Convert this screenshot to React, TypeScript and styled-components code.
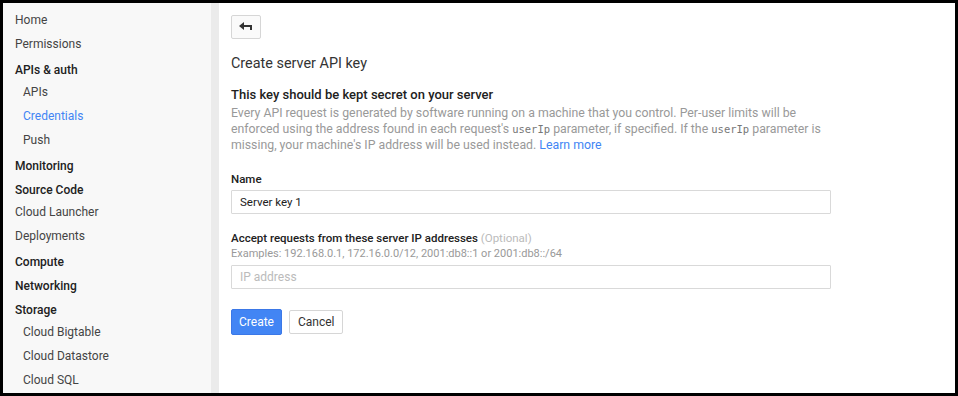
import React from 'react';
import styled, { createGlobalStyle } from 'styled-components';

const GlobalStyle = createGlobalStyle`
  html, body {
    margin: 0;
    padding: 0;
    background: #000;
  }
  body {
    font-family: Roboto, "Liberation Sans", Arial, sans-serif;
    font-size: 12px;
    color: #333;
  }
`;

const Frame = styled.div`
  display: flex;
  margin: 3px;
  width: 952px;
  height: 390px;
  background: #fff;
  overflow: hidden;
`;

const Sidebar = styled.nav`
  flex: 0 0 208px;
  background: #f8f8f8;
  border-right: 8px solid #ebebeb;
  padding-top: 5px;
`;

const NavItem = styled.div<{ $header?: boolean; $sub?: boolean; $active?: boolean }>`
  height: 24px;
  box-sizing: border-box;
  padding-left: ${p => (p.$sub ? 20 : 12)}px;
  padding-top: ${p => (p.$header ? 4 : 0)}px;
  line-height: ${p => (p.$header ? 20 : 24)}px;
  font-size: 12px;
  font-weight: ${p => (p.$header ? 500 : 400)};
  color: ${p => (p.$active ? '#4285f4' : p.$header ? '#212121' : '#444')};
  white-space: nowrap;
`;

const Main = styled.main`
  flex: 1;
  padding: 12px 0 0 12px;
`;

const BackButton = styled.button`
  display: flex;
  align-items: center;
  justify-content: center;
  width: 30px;
  height: 24px;
  padding: 0;
  background: #fafafa;
  border: 1px solid #d6d6d6;
  border-radius: 2px;
`;

const Title = styled.h1`
  margin: 15px 0 0;
  font-size: 14.4px;
  line-height: 20px;
  font-weight: 400;
  color: #333;
`;

const Heading = styled.div`
  margin-top: 13px;
  font-size: 13px;
  font-weight: 500;
  line-height: 16px;
  color: #212121;
`;

const Help = styled.p`
  margin: 2px 0 0;
  width: 600px;
  font-size: 12.3px;
  line-height: 16px;
  color: #999;
`;

const Code = styled.code`
  font-family: "DejaVu Sans Mono", "Liberation Mono", monospace;
  font-size: 10.5px;
  line-height: 1;
  color: #777;
`;

const Link = styled.a`
  color: #4285f4;
  text-decoration: none;
`;

const Label = styled.div<{ $top: number }>`
  margin-top: ${p => p.$top}px;
  font-size: 11.5px;
  font-weight: 500;
  line-height: 16px;
  color: #212121;
`;

const Optional = styled.span`
  font-weight: 400;
  color: #bbb;
`;

const Hint = styled.div`
  font-size: 11px;
  line-height: 16px;
  color: #999;
`;

const Input = styled.input<{ $top: number }>`
  display: block;
  box-sizing: border-box;
  margin-top: ${p => p.$top}px;
  width: 600px;
  height: 24px;
  padding: 0 8px;
  border: 1px solid #d9d9d9;
  border-radius: 1px;
  font-family: inherit;
  font-size: 11.5px;
  color: #212121;
  outline: none;

  &::placeholder {
    font-size: 12px;
    color: #bbb;
  }
`;

const Actions = styled.div`
  display: flex;
  gap: 7px;
  margin-top: 20px;
`;

const Button = styled.button<{ $primary?: boolean }>`
  height: ${p => (p.$primary ? 26 : 24)}px;
  margin-top: ${p => (p.$primary ? 0 : 1)}px;
  padding: 0 ${p => (p.$primary ? 7 : 8)}px;
  border-radius: 2px;
  font-family: inherit;
  font-size: 12px;
  border: 1px solid ${p => (p.$primary ? '#3b78e7' : '#d6d6d6')};
  background: ${p => (p.$primary ? '#4285f4' : '#fff')};
  color: ${p => (p.$primary ? '#fff' : '#333')};
`;

const BackArrow = () => (
  <svg width="14" height="10" viewBox="0 0 14 10">
    <path d="M0 4 L5 0 L5 3 L13 3 L13 8 L11 8 L11 5 L5 5 L5 8 Z" fill="#333" />
  </svg>
);

const nav: { label: string; header?: boolean; sub?: boolean; active?: boolean }[] = [
  { label: 'Home' },
  { label: 'Permissions' },
  { label: 'APIs & auth', header: true },
  { label: 'APIs', sub: true },
  { label: 'Credentials', sub: true, active: true },
  { label: 'Push', sub: true },
  { label: 'Monitoring', header: true },
  { label: 'Source Code', header: true },
  { label: 'Cloud Launcher' },
  { label: 'Deployments' },
  { label: 'Compute', header: true },
  { label: 'Networking', header: true },
  { label: 'Storage', header: true },
  { label: 'Cloud Bigtable', sub: true },
  { label: 'Cloud Datastore', sub: true },
  { label: 'Cloud SQL', sub: true },
];

export default function App() {
  return (
    <>
      <GlobalStyle />
      <Frame>
        <Sidebar>
          {nav.map(item => (
            <NavItem key={item.label} $header={item.header} $sub={item.sub} $active={item.active}>
              {item.label}
            </NavItem>
          ))}
        </Sidebar>
        <Main>
          <BackButton aria-label="Back">
            <BackArrow />
          </BackButton>
          <Title>Create server API key</Title>
          <Heading>This key should be kept secret on your server</Heading>
          <Help>
            Every API request is generated by software running on a machine that you control. Per-user limits will be
            enforced using the address found in each request's <Code>userIp</Code> parameter, if specified. If the{' '}
            <Code>userIp</Code> parameter is missing, your machine's IP address will be used instead.{' '}
            <Link href="#">Learn more</Link>
          </Help>
          <Label $top={18}>Name</Label>
          <Input $top={3} defaultValue="Server key 1" />
          <Label $top={16}>
            Accept requests from these server IP addresses <Optional>(Optional)</Optional>
          </Label>
          <Hint>Examples: 192.168.0.1, 172.16.0.0/12, 2001:db8::1 or 2001:db8::/64</Hint>
          <Input $top={3} placeholder="IP address" />
          <Actions>
            <Button $primary>Create</Button>
            <Button>Cancel</Button>
          </Actions>
        </Main>
      </Frame>
    </>
  );
}
